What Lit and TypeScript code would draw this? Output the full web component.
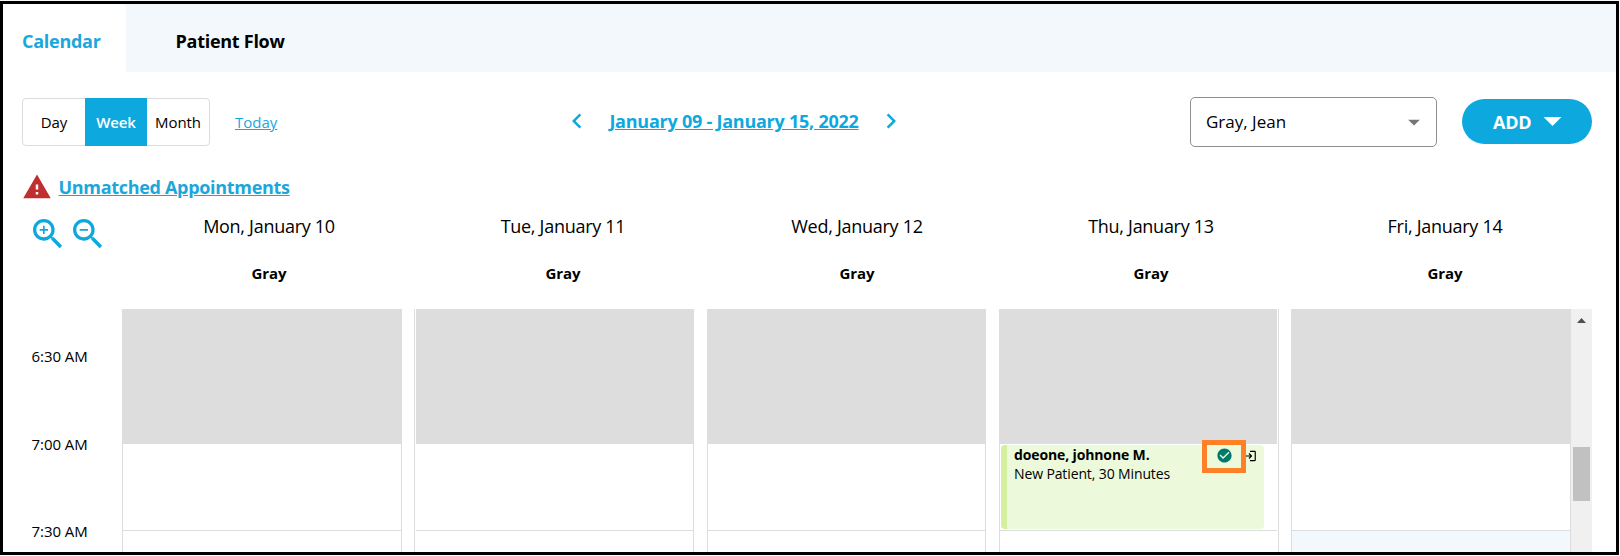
import { LitElement, html, css, svg } from "lit";
import { customElement, property } from "lit/decorators.js";

const LENS =
  "M15.5 14h-.79l-.28-.27C15.41 12.59 16 11.11 16 9.5 16 5.91 13.09 3 9.5 3S3 5.91 3 9.5 5.91 16 9.5 16c1.61 0 3.09-.59 4.23-1.57l.27.28v.79l5 4.99L20.49 19l-4.99-5zm-6 0C7.01 14 5 11.99 5 9.5S7.01 5 9.5 5 14 7.01 14 9.5 11.99 14 9.5 14z";

const ICONS: Record<string, string> = {
  left: "M15.41 7.41L14 6l-6 6 6 6 1.41-1.41L10.83 12z",
  right: "M10 6L8.59 7.41 13.17 12l-4.58 4.59L10 18l6-6z",
  warning: "M1 21h22L12 2 1 21zm12-3h-2v-2h2v2zm0-4h-2v-4h2v4z",
  zoomIn: LENS + "M12 10h-2v2H9v-2H7V9h2V7h1v2h2v1z",
  zoomOut: LENS + "M7 9h5v1H7z",
  caret: "M7 10l5 5 5-5z",
  check:
    "M12 2C6.48 2 2 6.48 2 12s4.48 10 10 10 10-4.48 10-10S17.52 2 12 2zm-2 15l-5-5 1.41-1.41L10 14.17l7.59-7.59L19 8l-9 9z",
  login:
    "M11 7L9.6 8.4l2.6 2.6H2v2h10.2l-2.6 2.6L11 17l5-5-5-5zm9 12h-8v2h8c1.1 0 2-.9 2-2V5c0-1.1-.9-2-2-2h-8v2h8v14z",
};

@customElement("ui-icon")
class UiIcon extends LitElement {
  static styles = css`
    :host { display: block; flex: none; }
    svg { display: block; width: 100%; height: 100%; fill: currentColor; }
  `;
  @property() name = "";
  render() {
    return html`<svg viewBox="0 0 24 24">${svg`<path d=${ICONS[this.name]}></path>`}</svg>`;
  }
}

const DAYS = [
  { label: "Mon, January 10", provider: "Gray" },
  { label: "Tue, January 11", provider: "Gray", kind: "inset-left" },
  { label: "Wed, January 12", provider: "Gray", kind: "narrow" },
  { label: "Thu, January 13", provider: "Gray", kind: "inset-right", booked: true },
  { label: "Fri, January 14", provider: "Gray", kind: "tinted" },
];

const TIMES = ["6:30 AM", "7:00 AM", "7:30 AM"];

@customElement("app-root")
class AppRoot extends LitElement {
  static styles = css`
    * { box-sizing: border-box; }
    :host {
      display: block;
      width: 1620px;
      height: 556px;
      overflow: hidden;
      padding-right: 1px;
      border-top: 1px solid #f6fafd;
      background: #fff;
      color: #000;
      font-family: "Open Sans", "Noto Sans", sans-serif;
      font-size: 15px;
      box-sizing: border-box;
    }
    .frame {
      height: 554px;
      border: 3px solid #000;
      overflow: hidden;
      display: flex;
      flex-direction: column;
    }
    .tabs { height: 68px; flex: none; display: flex; background: #f3f8fc; }
    .tab {
      display: flex;
      align-items: center;
      height: 68px;
      padding-top: 6px;
      font-size: 18px;
      font-weight: 700;
      letter-spacing: -0.27px;
      white-space: nowrap;
    }
    .tab.active {
      width: 123px;
      padding-left: 19px;
      background: #fff;
      color: #1ba7dc;
      border-top-right-radius: 4px;
    }
    .tab.other { padding-left: 49.5px; }

    .toolbar { height: 98px; flex: none; display: flex; align-items: center; padding: 0 24px 0 19px; }
    .toggle { display: flex; width: 188px; height: 48px; margin-top: 2px; border: 1px solid #dcdcdc; border-radius: 4px; }
    .toggle span { flex: 1; display: flex; align-items: center; justify-content: center; letter-spacing: -0.08px; }
    .toggle .on { flex: none; width: 62px; margin: -1px 0; background: #0da9de; color: #fff; font-weight: 600; letter-spacing: -0.1px; }
    .today { margin: 2px 0 0 25px; width: 42px; color: #1ba7dc; text-decoration: underline; }
    .range { display: flex; align-items: center; margin-left: 285px; color: #0da9de; }
    .range ui-icon { width: 30px; height: 30px; }
    .range a { width: 250px; margin: 0 17px; display: flex; justify-content: center; font-size: 18px; font-weight: 700; letter-spacing: -0.24px; text-decoration: underline; white-space: nowrap; }
    .select {
      margin: 2px 0 0 auto;
      width: 247px;
      height: 50px;
      display: flex;
      align-items: center;
      justify-content: space-between;
      padding: 0 9px 0 15px;
      border: 1px solid #8f8f8f;
      border-radius: 5px;
      font-size: 17px;
    }
    .select span { padding-bottom: 1px; }
    .select ui-icon { width: 28px; height: 28px; margin-right: -1px; color: #757575; }
    .add {
      width: 130px;
      height: 45px;
      margin-left: 25px;
      display: flex;
      align-items: center;
      gap: 8px;
      padding: 1px 0 0 31px;
      border-radius: 23px;
      background: #0da9de;
      color: #fff;
      font-size: 18px;
      font-weight: 700;
      letter-spacing: -0.2px;
    }
    .add ui-icon { width: 43px; height: 43px; margin: -2px -8px 0; }

    .alert { height: 34px; flex: none; display: flex; align-items: center; padding-left: 19px; gap: 6.5px; color: #1ba7dc; }
    .alert ui-icon { width: 30px; height: 30px; color: #c12e2e; }
    .alert a { font-size: 18px; font-weight: 700; letter-spacing: -0.31px; text-decoration: underline; }

    .heads { height: 105px; flex: none; display: grid; grid-template-columns: 119px repeat(5, 294px); }
    .zooms { display: flex; padding: 10px 0 0 25px; color: #0da9de; }
    .zooms ui-icon { width: 40px; height: 40px; }
    .head { text-align: center; }
    .date { font-size: 18px; letter-spacing: -0.28px; line-height: 24px; padding-top: 10px; }
    .who { font-size: 15px; font-weight: 700; letter-spacing: -0.1px; line-height: 20px; margin-top: 25px; }

    .lower { flex: 1; min-height: 0; display: flex; }
    .board { display: grid; grid-template-columns: 292px 293px 292px 292px 280px; width: 1449px; }
    .times { width: 119px; flex: none; padding: 37px 0 0 28.5px; font-size: 15px; letter-spacing: -0.05px; }
    .times div { height: 87.5px; line-height: 20px; white-space: nowrap; }
    .day { width: 280px; border: 1px solid #dcdddf; border-width: 0 1px; display: flex; flex-direction: column; position: relative; }
    .narrow { width: 279px; }
    .closed { height: 135px; flex: none; background: #ddd; }
    .slot { height: 87px; flex: none; border-bottom: 1px solid #dcdddf; padding: 1px 0 0 1px; }
    .rest { flex: 1; }
    .inset-left { padding-left: 1px; }
    .inset-right { padding-right: 1px; }
    .tinted .rest { background: #f3f8fc; }

    .event {
      width: 263px;
      height: 84px;
      border-left: 6px solid #d2f0a0;
      border-radius: 4px;
      background: #ecf9db;
      padding: 0 7.5px 0 7px;
      display: flex;
      justify-content: space-between;
    }
    .event b, .event span { display: block; white-space: nowrap; line-height: 19px; font-size: 14px; }
    .event b { font-weight: 700; letter-spacing: -0.13px; }
    .event span { letter-spacing: -0.12px; }
    .marks { display: flex; padding-top: 2px; gap: 10px; }
    .marks .check { width: 17px; height: 17px; color: #00796b; }
    .marks .login { width: 14px; height: 14px; margin-top: 2px; }
    .callout { position: absolute; left: 202px; top: 131px; width: 44px; height: 33px; border: 5px solid #ff8127; }

    .scroll { width: 21px; flex: none; background: #f0f0f0; display: flex; flex-direction: column; align-items: center; padding-top: 9px; }
    .scroll .up { width: 9px; height: 5px; fill: #505050; }
    .scroll .thumb { width: 17px; height: 54px; margin-top: 124px; background: #c1c1c1; }
  `;

  private renderDay(d: (typeof DAYS)[number]) {
    return html`<div class="day ${d.kind ?? ""}">
      <div class="closed"></div>
      <div class="slot">
        ${d.booked
          ? html`<div class="event">
                <div><b>doeone, johnone M.</b><span>New Patient, 30 Minutes</span></div>
                <div class="marks">
                  <ui-icon class="check" name="check"></ui-icon>
                  <ui-icon class="login" name="login"></ui-icon>
                </div>
              </div>
              <div class="callout"></div>`
          : ""}
      </div>
      <div class="rest"></div>
    </div>`;
  }

  render() {
    return html`<div class="frame">
      <div class="tabs">
        <div class="tab active"><span>Calendar</span></div>
        <div class="tab other"><span>Patient Flow</span></div>
      </div>
      <div class="toolbar">
        <div class="toggle"><span>Day</span><span class="on">Week</span><span>Month</span></div>
        <a class="today">Today</a>
        <div class="range">
          <ui-icon name="left"></ui-icon>
          <a>January 09 - January 15, 2022</a>
          <ui-icon name="right"></ui-icon>
        </div>
        <div class="select"><span>Gray, Jean</span><ui-icon name="caret"></ui-icon></div>
        <div class="add"><span>ADD</span><ui-icon name="caret"></ui-icon></div>
      </div>
      <div class="alert"><ui-icon name="warning"></ui-icon><a>Unmatched Appointments</a></div>
      <div class="heads">
        <div class="zooms"><ui-icon name="zoomIn"></ui-icon><ui-icon name="zoomOut"></ui-icon></div>
        ${DAYS.map((d) => html`<div class="head"><div class="date">${d.label}</div><div class="who">${d.provider}</div></div>`)}
      </div>
      <div class="lower">
        <div class="times">${TIMES.map((t) => html`<div>${t}</div>`)}</div>
        <div class="board">${DAYS.map((d) => this.renderDay(d))}</div>
        <div class="scroll">
          <svg class="up" viewBox="0 0 9 5"><path d="M4.5 0L9 5H0z"></path></svg>
          <div class="thumb"></div>
        </div>
      </div>
    </div>`;
  }
}
